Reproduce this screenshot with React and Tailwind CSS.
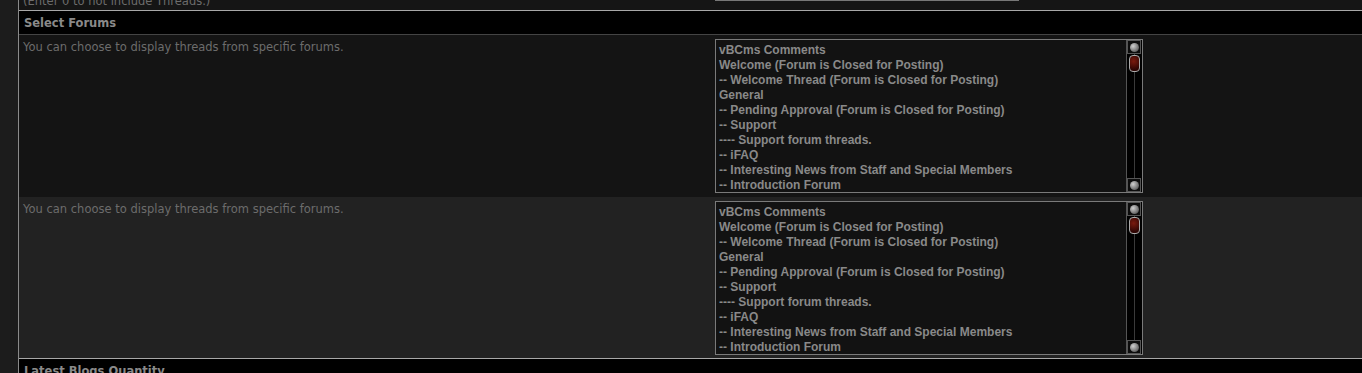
const forums = [
  'vBCms Comments',
  'Welcome (Forum is Closed for Posting)',
  '-- Welcome Thread (Forum is Closed for Posting)',
  'General',
  '-- Pending Approval (Forum is Closed for Posting)',
  '-- Support',
  '---- Support forum threads.',
  '-- iFAQ',
  '-- Interesting News from Staff and Special Members',
  '-- Introduction Forum',
]

function Knob() {
  return (
    <div className="h-[14px] w-[14px] border border-[#555] bg-[#0c0c0c] flex items-center justify-center">
      <div className="h-[9px] w-[9px] rounded-full bg-[radial-gradient(circle_at_35%_35%,#d0d0d0,#767676_60%,#3a3a3a)]" />
    </div>
  )
}

function ForumSelect() {
  return (
    <div className="flex h-[154px] w-[428px] border border-[#7a7a7a] bg-[#121212]">
      <div className="flex-1 pl-[3px] pt-[3px] font-['Liberation_Sans',sans-serif] text-[12px] font-bold leading-[15px] text-[#898989]">
        {forums.map((f) => (
          <div key={f} className="whitespace-nowrap">{f}</div>
        ))}
      </div>
      <div className="flex w-[16px] flex-col border-l border-[#555] bg-black">
        <Knob />
        <div className="relative flex-1">
          <div className="absolute left-[7px] top-0 bottom-0 w-px bg-[#3a3a3a]" />
          <div className="relative mx-auto mt-[1px] h-[17px] w-[11px] rounded-[4px] border border-[#aaa] bg-[radial-gradient(circle_at_40%_35%,#7a1a0e,#2e0503_75%)]" />
        </div>
        <Knob />
      </div>
    </div>
  )
}

function Row({ bg, last }) {
  return (
    <div className={`grid grid-cols-[692px_1fr] ${bg}`}>
      <div className="px-[4px] pt-[5px] font-['DejaVu_Sans',sans-serif] text-[11.5px] leading-[14px] text-[#6c6c6c]">
        You can choose to display threads from specific forums.
      </div>
      <div className={last ? 'px-[4px] pt-[4px] pb-[3px]' : 'px-[4px] pt-[4px] pb-[4px]'}>
        <ForumSelect />
      </div>
    </div>
  )
}

export default function App() {
  return (
    <div className="flex h-[373px] w-[1362px] overflow-hidden bg-[#1b1b1b]">
      <div className="w-[18px] shrink-0 bg-[#1c1c1c]" />
      <div className="flex-1 border-l border-[#8a8a8a] bg-[#141414]">
        <div className="relative h-[10px] overflow-hidden bg-[#151515]">
          <div className="absolute left-[4px] top-[-7px] font-['DejaVu_Sans',sans-serif] text-[11.5px] text-[#6c6c6c]">
            (Enter 0 to not include Threads.)
          </div>
          <div className="absolute left-[696px] top-[-10px] h-[11px] w-[304px] border border-[#777] bg-[#111]" />
        </div>
        <div className="h-[25px] border-t border-b border-t-[#a8a8a8] border-b-[#444] bg-black px-[5px] pt-[5px] font-['DejaVu_Sans',sans-serif] text-[11.5px] font-bold leading-[14px] text-[#8a8a8a]">
          Select Forums
        </div>
        <Row bg="bg-[#141414]" />
        <Row bg="bg-[#222222]" last />
        <div className="h-[24px] border-t border-[#a8a8a8] bg-black px-[5px] pt-[5px] font-['DejaVu_Sans',sans-serif] text-[11.5px] font-bold leading-[14px] text-[#8a8a8a]">
          Latest Blogs Quantity
        </div>
      </div>
    </div>
  )
}
